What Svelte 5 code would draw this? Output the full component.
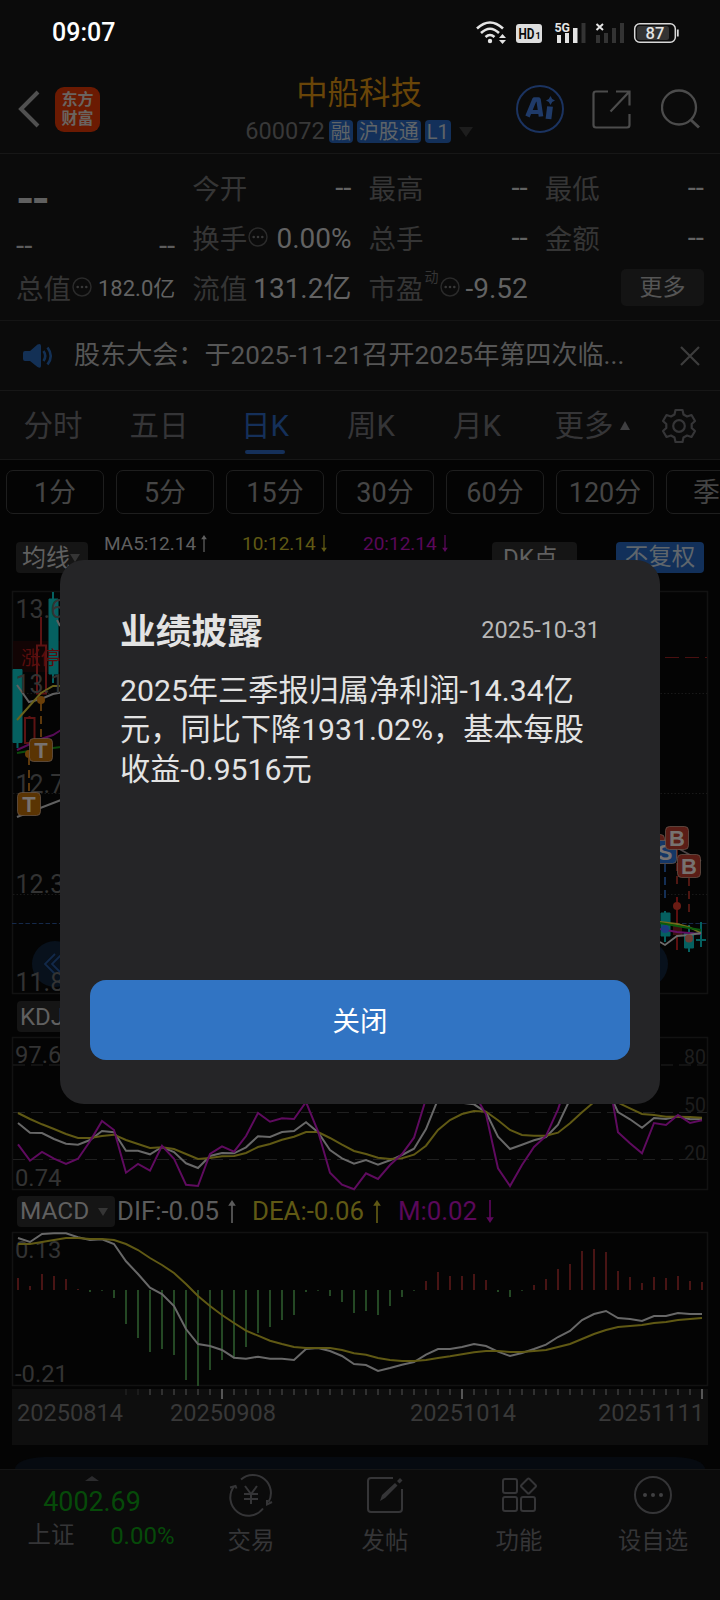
<script lang="ts">
	const stats = [
		{ label: '今开', value: '--' },
		{ label: '最高', value: '--' },
		{ label: '最低', value: '--' },
		{ label: '换手', value: '0.00%', hint: true },
		{ label: '总手', value: '--' },
		{ label: '金额', value: '--' },
		{ label: '流值', value: '131.2亿' },
		{ label: '市盈', value: '-9.52', hint: true, sup: '动' }
	];
	const tabs = ['分时', '五日', '日K', '周K', '月K'];
	const periods = ['1分', '5分', '15分', '30分', '60分', '120分', '季K'];
	const nav_items = ['交易', '发帖', '功能', '设自选'];

	const price_labels = [
		{ text: '13.6', y: 618 },
		{ text: '13.1', y: 693 },
		{ text: '12.7', y: 793 },
		{ text: '12.3', y: 893 },
		{ text: '11.8', y: 991 }
	];

	// one value per trading day, in thirds of a pixel below the top of the panel
	const kdj_k = [129, 158, 159, 177, 191, 194, 180, 153, 157, 212, 212, 223, 201, 216, 250, 264, 228, 219, 220, 202, 169, 171, 156, 153, 127, 157, 210, 235, 251, 240, 254, 241, 225, 206, 147, 58, 45, 68, 73, 97, 170, 207, 194, 181, 171, 134, 58, 20, 10, 20, 96, 118, 143, 114, 117, 109, 118, 117];
	const kdj_d = [99, 117, 133, 147, 162, 174, 174, 168, 164, 180, 192, 204, 202, 207, 222, 237, 234, 229, 228, 219, 201, 192, 179, 170, 156, 156, 174, 194, 213, 222, 233, 237, 235, 224, 197, 150, 120, 102, 93, 95, 121, 150, 165, 167, 167, 158, 130, 97, 66, 50, 68, 85, 102, 105, 110, 110, 111, 113];
	const kdj_j = [193, 242, 216, 236, 252, 236, 184, 123, 150, 278, 252, 272, 197, 236, 314, 318, 222, 199, 215, 168, 99, 125, 115, 117, 66, 154, 278, 314, 328, 280, 297, 255, 222, 173, 56, -40, -60, -20, 40, 103, 265, 318, 255, 201, 168, 88, -20, -60, -60, -50, 157, 190, 220, 129, 135, 105, 129, 121];
	const dif = [54, 66, 42, 40, 40, 52, 60, 58, 72, 124, 162, 203, 222, 258, 327, 372, 378, 390, 413, 416, 410, 416, 416, 420, 387, 384, 393, 408, 432, 435, 453, 444, 434, 426, 404, 387, 387, 381, 372, 378, 395, 408, 399, 387, 374, 351, 333, 300, 282, 273, 294, 297, 303, 288, 288, 279, 282, 282];
	const dea = [72, 72, 66, 60, 54, 54, 57, 57, 60, 72, 90, 114, 135, 159, 192, 228, 258, 285, 309, 332, 347, 362, 372, 381, 384, 384, 384, 390, 400, 404, 414, 420, 423, 423, 420, 414, 409, 403, 397, 393, 393, 396, 396, 393, 390, 381, 372, 357, 342, 330, 321, 318, 315, 309, 306, 300, 297, 294];
	const macd = [174, 198, 162, 168, 177, 207, 216, 212, 234, 312, 354, 396, 387, 405, 480, 498, 450, 420, 415, 381, 339, 321, 300, 285, 216, 212, 228, 246, 279, 273, 285, 258, 231, 212, 183, 156, 168, 168, 162, 180, 216, 231, 212, 195, 177, 147, 132, 93, 87, 96, 153, 171, 189, 171, 174, 168, 183, 186];

	const ticks = Array.from({ length: 49 }, (_, i) => i + 9);

	let active_tab = $state('日K');
	let dialog_open = $state(true);

	function dayX(index: number) {
		return 18 + index * 12;
	}

	function toPoints(values: number[], top: number) {
		return values.map((v, i) => `${dayX(i)},${(top + v / 3).toFixed(1)}`).join(' ');
	}
</script>

{#snippet hint()}
	<svg class="hint" viewBox="0 0 20 20">
		<circle cx="10" cy="10" r="9" fill="none" stroke="#2a2a2a" stroke-width="1.5" />
		<g fill="#383838"><circle cx="5.7" cy="10" r="1.3" /><circle cx="10" cy="10" r="1.3" /><circle cx="14.3" cy="10" r="1.3" /></g>
	</svg>
{/snippet}

{#snippet arrow(down: boolean)}
	<svg class="arrow" class:down viewBox="0 0 8 24">
		<path d="M4 3V24" stroke="currentColor" stroke-width="1.8" />
		<path d="M4 0L8 6H0Z" fill="currentColor" />
	</svg>
{/snippet}

{#snippet badge(x: number, y: number, letter: string, fill: string)}
	<rect x={x - 11.5} y={y - 11.5} width="23" height="23" rx="4" {fill} stroke="#6b5a50" stroke-opacity=".7" />
	<text {x} y={y + 8} class="badge-letter">{letter}</text>
{/snippet}

<div class="screen">
	<div class="status">
		<span class="clock">09:07</span>
		<svg width="206" height="30" viewBox="475 17 206 30">
			<g fill="none" stroke="#e4e4e4" stroke-width="2.6">
				<path d="M477 27.5Q490 15.5 503 27.5" />
				<path d="M481 32Q490 23.5 499 32" />
				<path d="M485.5 36Q490 32 494.5 36" />
			</g>
			<circle cx="490" cy="40" r="2.2" fill="#e4e4e4" />
			<path d="M502.5 33L506 37H499ZM502.5 43L499 39H506Z" fill="#e4e4e4" />
			<rect x="516" y="23" width="26" height="19" rx="3" fill="#dedede" />
			<text x="518.5" y="38" class="hd" textLength="16" lengthAdjust="spacingAndGlyphs">HD</text>
			<text x="535.5" y="37.5" class="hd-num">1</text>
			<text x="554.5" y="31" class="net" textLength="15.5" lengthAdjust="spacingAndGlyphs">5G</text>
			<path d="M557 34h4v8h-4zM565 32h4v10h-4zM573 27h4.5v15h-4.5z" fill="#e4e4e4" />
			<path d="M581.5 22h4v20h-4zM596 34h4v8h-4zM604 32h4v10h-4zM612 27h4v15h-4zM620 22h4v20h-4z" fill="#333" />
			<path d="M596.5 23L603 29M603 23L596.5 29" stroke="#e4e4e4" stroke-width="2" />
			<rect x="634.7" y="22.7" width="40.6" height="18.6" rx="5" fill="none" stroke="#d8d8d8" stroke-width="1.5" />
			<rect x="637" y="25" width="32" height="14" rx="2.5" fill="#333" />
			<path d="M677.8 28.5v7" stroke="#d8d8d8" stroke-width="1.8" />
			<text x="655" y="38" class="battery">87</text>
		</svg>
	</div>

	<header>
		<div class="left">
			<svg width="22" height="38" viewBox="0 0 22 38"><path d="M20 2L3 19L20 36" fill="none" stroke="#505050" stroke-width="4" /></svg>
			<div class="logo"><span>东方</span><span>财富</span></div>
		</div>
		<div class="name">
			<h1>中船科技</h1>
			<div class="code">
				<span class="num">600072</span>
				<span class="tag">融</span>
				<span class="tag">沪股通</span>
				<span class="tag">L1</span>
				<svg width="14" height="10" viewBox="0 0 14 10"><path d="M0 0H14L7 10Z" fill="#1d1d1d" /></svg>
			</div>
		</div>
		<div class="actions">
			<svg width="48" height="48" viewBox="0 0 48 48">
				<circle cx="24" cy="24" r="23" fill="none" stroke="#1b3360" stroke-width="2" />
				<path d="M11.5 31.5L18.5 14.5H22.500L25 31.5" fill="none" stroke="#1f3a68" stroke-width="4.6" stroke-linejoin="round" />
				<path d="M15 27H24" stroke="#1f3a68" stroke-width="4" />
				<path d="M34 21.5L32.5 34" stroke="#1f3a68" stroke-width="5.8" />
				<path d="M34.5 11L36.200 14L39 15.5L36.200 17L34.5 20L32.800 17L30 15.5L32.800 14Z" fill="#1f3a68" />
			</svg>
			<svg width="39" height="39" viewBox="0 0 39 39" fill="none" stroke="#4c4c4c" stroke-width="2.2">
				<path d="M16 1.5H4Q1.5 1.5 1.5 4V35Q1.5 37.5 4 37.5H35Q37.5 37.5 37.5 35V24" />
				<path d="M24 1.5H37.5V15.5M37 2L18.5 21.5" />
			</svg>
			<svg class="search" width="39" height="40" viewBox="0 0 39 40" fill="none" stroke="#4c4c4c" stroke-width="2.3">
				<circle cx="18" cy="18.5" r="17" />
				<path d="M30 31L38 38.5" stroke-width="3" />
			</svg>
		</div>
	</header>

	<section class="quote">
		<div class="last">--</div>
		{#each stats as item, index}
			{#if index === 3}
				<div class="cell change"><span>--</span><span>--</span></div>
			{:else if index === 6}
				<div class="cell"><span class="label">总值</span>{@render hint()}<span class="value small">182.0亿</span></div>
			{/if}
			<div class="cell">
				<span class="label">{item.label}</span>
				{#if item.sup}<sup>{item.sup}</sup>{/if}
				{#if item.hint}{@render hint()}{/if}
				<span class="value" class:dashes={item.value === '--'}>{item.value}</span>
			</div>
		{/each}
		<button class="more">更多</button>
	</section>

	<div class="news">
		<svg width="31" height="26" viewBox="0 0 31 26">
			<path d="M2 8H7L14.5 1.5Q18 0 18 3V23Q18 26 14.5 24L7 18H2Q0 18 0 16V10Q0 8 2 8Z" fill="#133055" />
			<path d="M20.5 8Q24 13 20.5 18M24.5 4.5Q31 13 24.5 21.5" fill="none" stroke="#133055" stroke-width="2.6" />
		</svg>
		<p>股东大会：于2025-11-21召开2025年第四次临...</p>
		<svg width="20" height="20" viewBox="0 0 20 20"><path d="M1 1L19 19M19 1L1 19" stroke="#3d3d3d" stroke-width="2.2" /></svg>
	</div>

	<nav class="tabs">
		{#each tabs as tab}
			<button class:active={tab === active_tab} onclick={() => (active_tab = tab)}>{tab}</button>
		{/each}
		<button class="wide">更多<svg width="10" height="9" viewBox="0 0 10 9"><path d="M5 0L10 9H0Z" fill="#3f3f41" /></svg></button>
		<svg class="gear" width="36" height="36" viewBox="0 0 36 36" fill="none" stroke="#353537" stroke-width="2.2" stroke-linejoin="round">
			<path d="M14.5 2H21.5L22.5 6.5L26 8.5L30.5 7L34 13L30.7 16V20L34 23L30.5 29L26 27.5L22.5 29.5L21.5 34H14.5L13.5 29.5L10 27.5L5.5 29L2 23L5.3 20V16L2 13L5.5 7L10 8.5L13.5 6.5Z" />
			<circle cx="18" cy="18" r="5.8" />
		</svg>
	</nav>

	<div class="periods">
		{#each periods as period}
			<button>{period}</button>
		{/each}
	</div>

	<div class="ma">
		<span class="pill ma-pill">均线<i class="caret"></i></span>
		<div class="ma-values">
			<span class="white">MA5:12.14 {@render arrow(false)}</span>
			<span class="yellow">10:12.14 {@render arrow(true)}</span>
			<span class="magenta">20:12.14 {@render arrow(true)}</span>
		</div>
		<span class="pill dk">DK点</span>
		<span class="pill blue">不复权</span>
	</div>

	<svg class="chart" width="720" height="412" viewBox="0 588 720 412">
		<rect x="12.5" y="591.5" width="695" height="402" class="frame" />
		<g stroke="#191919" stroke-dasharray="1.5 2">
			<path d="M13 693.5H707M13 793.5H707M13 894.5H707" />
		</g>
		<rect x="13" y="641" width="50" height="31" fill="#120404" />
		<path d="M665 657.5H707" stroke="#4a1010" stroke-dasharray="14 6" />
		<path d="M12 923.5H707" stroke="#15294a" stroke-dasharray="4.5 2.2" stroke-width="1.2" />
		<circle cx="55" cy="964" r="23" fill="#08111c" />
		<circle cx="645" cy="964" r="23" fill="#08111c" />
		<path d="M55 954L45 964L55 974M62 954L52 964L62 974" fill="none" stroke="#12294a" stroke-width="1.8" />
		<path d="M17.5 669V748M53 592V683" class="teal" stroke-width="2" />
		<path d="M13 669.5h9v73h-9zM49 599h9v75h-9z" class="teal" />
		<g fill="none" stroke="#5c1313" stroke-width="2">
			<path d="M41 617V645M29.5 716V718" />
			<rect x="25" y="718" width="9.5" height="25" />
			<rect x="37" y="645.5" width="9" height="48" />
		</g>
		<text x="21" y="664.5" class="limit">涨停</text>
		<g fill="none" stroke-width="2">
			<path d="M17 685L29 702L41 699L53 694L61 692.5M17 817L61 800M57 620L60 626" stroke="#606060" />
			<path d="M17 720L41 693L53 686H61" stroke="#6a621c" />
			<path d="M17 750L41 739L53 735L61 730" stroke="#560b56" />
			<path d="M17 753L29 751L61 747" stroke="#0c4a0c" />
		</g>
		{#each price_labels as label}
			<text x="15.5" y={label.y} class="axis big">{label.text}</text>
		{/each}
		<path d="M41 703V738M29 757V792" stroke="#5e390c" stroke-width="2" stroke-dasharray="8 5" />
		<circle cx="41" cy="700" r="4" fill="#6b3f08" />
		<circle cx="29" cy="754" r="4" fill="#6b3f08" />
		{@render badge(41, 750, 'T', '#5a3403')}
		{@render badge(29, 804, 'T', '#5a3403')}

		<path d="M665 864V902" stroke="#142f55" stroke-width="2" stroke-dasharray="8 5" />
		<path d="M677 850V889M689 878V917" stroke="#4f1712" stroke-width="2" stroke-dasharray="8 5" />
		<path d="M665 911V942M689 925V952M701 922V947M696 940H706" class="teal" stroke-width="2" />
		<path d="M661 913h9v23h-9zM684.5 933h9v15h-9z" class="teal" />
		<path d="M677 897V950" stroke="#5c0f0f" stroke-width="2" />
		<path d="M673 924h9v11h-9z" fill="#3c1010" />
		<g fill="none" stroke-width="1.8">
			<path d="M660 922L677 924L689 927L701 933" stroke="#756c1c" />
			<path d="M660 923L689 928L701 930" stroke="#0c5a0c" />
			<path d="M660 929L677 932L701 934" stroke="#621062" />
			<path d="M660 942L665 945L677 936L689 935L701 933" stroke="#6c6c6c" />
			<path d="M665 841L701 861" stroke="#4e4446" />
		</g>
		<circle cx="665" cy="929" r="4" fill="#1b3c80" />
		<circle cx="677" cy="906" r="4" fill="#6b1c14" />
		<circle cx="689" cy="938.5" r="4" fill="#6e3c34" />
		{@render badge(653, 846, 'B', '#5a1d16')}
		{@render badge(665, 852, 'S', '#153766')}
		{@render badge(677, 838, 'B', '#5a1d16')}
		{@render badge(689, 866, 'B', '#5a1d16')}
	</svg>

	<div class="indicator first"><span class="pill">KDJ</span></div>

	<svg class="chart" width="720" height="160" viewBox="0 1034 720 160">
		<rect x="12.5" y="1037.5" width="695" height="152" class="frame" />
		<path d="M13 1065H707M13 1112.5H707M13 1159.5H707" stroke="#202020" stroke-dasharray="12 6" />
		<text x="15" y="1063" class="axis">97.6</text>
		<text x="15" y="1186" class="axis">0.74</text>
		<text x="706" y="1064" class="level">80</text>
		<text x="706" y="1112" class="level">50</text>
		<text x="706" y="1159.5" class="level">20</text>
		<polyline points={toPoints(kdj_k, 1080)} stroke="#686868" />
		<polyline points={toPoints(kdj_d, 1080)} stroke="#605914" />
		<polyline points={toPoints(kdj_j, 1080)} stroke="#5f0b5f" />
	</svg>

	<div class="indicator">
		<span class="pill macd">MACD<i class="caret"></i></span>
		<span class="dif">DIF:-0.05 {@render arrow(false)}</span>
		<span class="yellow dea">DEA:-0.06 {@render arrow(false)}</span>
		<span class="magenta">M:0.02 {@render arrow(true)}</span>
	</div>

	<svg class="chart" width="720" height="216" viewBox="0 1230 720 216">
		<rect x="12.5" y="1232.5" width="695" height="153" class="frame" />
		<text x="15" y="1258" class="axis">0.13</text>
		<text x="15" y="1382" class="axis">-0.21</text>
		{#each macd as value, i}
			<path d="M{dayX(i)} 1290V{(1220 + value / 3).toFixed(1)}" stroke={value < 210 ? '#481414' : '#244824'} stroke-width="2" />
		{/each}
		<polyline points={toPoints(dif, 1220)} stroke="#686868" />
		<polyline points={toPoints(dea, 1220)} stroke="#605914" />
		<rect x="12" y="1389" width="696" height="56" fill="#0e0e0e" />
		{#each ticks as i}
			{@const major = i % 20 === 17}
			<path d="M{dayX(i)} 1389v{major ? 10 : 6}" stroke={major ? '#565656' : i < 11 ? '#1b1b1b' : '#303030'} stroke-width="2" />
		{/each}
		<g class="dates">
			<text x="17" y="1421">20250814</text>
			<text x="170" y="1421">20250908</text>
			<text x="410" y="1421">20251014</text>
			<text x="598" y="1421">20251111</text>
		</g>
	</svg>

	<div class="strip"></div>

	<footer>
		<div class="index">
			<svg width="14" height="5" viewBox="0 0 14 5"><path d="M7 0L14 5H0Z" fill="#2b2b2d" /></svg>
			<span class="point">4002.69</span>
			<div class="row"><span>上证</span><span class="rate">0.00%</span></div>
		</div>
		{#each nav_items as item, i}
			<div class="item">
				<svg width="44" height="40" viewBox="0 0 44 40" fill="none" stroke="#353537" stroke-width="2">
					{#if i === 0}
						<path d="M12 4.5A18 18 0 0 1 39.500 27M34 33.500A18 18 0 0 1 5 11.500" />
						<path d="M1 12.5L6.5 11L7.5 13.5M43 27L38 29.5L38 25" />
						<path d="M16 11L22 19L28 11M22 19V29M15 19H29M15 24H29" />
					{:else if i === 1}
						<path d="M30 3H8Q5 3 5 6V34Q5 37 8 37H36Q39 37 39 34V14" />
						<path d="M17 26L19 20L32 8L34.5 10.5L22 23ZM34 6L37 3L39.5 5.5L36.5 8.5Z" fill="#353537" stroke="none" />
					{:else if i === 2}
						<rect x="6" y="4" width="14" height="14" rx="2" />
						<rect x="6" y="22" width="14" height="14" rx="2" />
						<rect x="24" y="22" width="14" height="14" rx="2" />
						<path d="M30.5 4Q31.5 3 32.5 4L38.5 10Q39.5 11 38.5 12L32.5 18Q31.5 19 30.5 18L24.5 12Q23.5 11 24.5 10Z" />
					{:else}
						<circle cx="22" cy="20" r="18" />
						<g fill="#404042" stroke="none"><circle cx="14" cy="20" r="2" /><circle cx="22" cy="20" r="2" /><circle cx="30" cy="20" r="2" /></g>
					{/if}
				</svg>
				<span>{item}</span>
			</div>
		{/each}
	</footer>

	{#if dialog_open}
		<div class="dialog" role="dialog" aria-label="业绩披露">
			<div class="dialog-head">
				<h2>业绩披露</h2>
				<time>2025-10-31</time>
			</div>
			<p>2025年三季报归属净利润-14.34亿元，同比下降1931.02%，基本每股收益-0.9516元</p>
			<button onclick={() => (dialog_open = false)}>关闭</button>
		</div>
	{/if}
</div>

<style>
	:global(body) {
		background: #0b0b0b;
	}

	.screen {
		position: relative;
		width: 720px;
		height: 1600px;
		overflow: hidden;
		display: flex;
		flex-direction: column;
		background: #040404;
		color: #5c5c5c;
		font-family: Roboto, 'Noto Sans CJK SC', sans-serif;
		line-height: 1;
	}

	.screen * {
		box-sizing: border-box;
	}

	.screen > * {
		flex-shrink: 0;
	}

	svg {
		display: block;
		flex-shrink: 0;
	}

	button {
		padding: 0;
		border: 0;
		background: none;
		color: inherit;
		font: inherit;
	}

	h1,
	h2,
	p {
		margin: 0;
		font-weight: 400;
	}

	.status {
		height: 65px;
		padding: 0 39px 0 52px;
		display: flex;
		align-items: center;
		justify-content: space-between;
		background: #0b0b0b;
	}

	.clock {
		color: #fff;
		font-size: 25px;
		font-weight: 500;
	}

	.hd {
		font: 700 15px Roboto, sans-serif;
		fill: #0b0b0b;
	}

	.hd-num {
		font: 700 9px Roboto, sans-serif;
		fill: #0b0b0b;
	}

	.net {
		font: 700 13.5px Roboto, sans-serif;
		fill: #e4e4e4;
	}

	.battery {
		font: 500 16.5px Roboto, sans-serif;
		fill: #e4e4e4;
		text-anchor: middle;
	}

	header {
		height: 89px;
		padding: 0 20px 0 18px;
		display: grid;
		grid-template-columns: 1fr auto 1fr;
		align-items: center;
		background: #0b0b0b;
		border-bottom: 1px solid #171717;
	}

	.left {
		display: flex;
		align-items: center;
		gap: 15px;
	}

	.logo {
		width: 45px;
		height: 45px;
		border-radius: 9px;
		display: flex;
		flex-direction: column;
		align-items: center;
		justify-content: center;
		gap: 3px;
		background: #6b1a02;
		color: #6a6460;
		font-size: 16px;
		font-weight: 700;
	}

	.name {
		padding-top: 3px;
		display: flex;
		flex-direction: column;
		align-items: center;
		gap: 11px;
	}

	h1 {
		color: #694508;
		font-size: 31.4px;
	}

	.code {
		display: flex;
		align-items: center;
		gap: 4px;
		height: 23px;
	}

	.num {
		color: #383838;
		font-size: 23.6px;
	}

	.tag {
		height: 23px;
		padding: 1px 2px 0;
		border-radius: 4px;
		background: #13305a;
		color: #5f6468;
		font-size: 20px;
		line-height: 23px;
	}

	.code svg {
		margin-left: 4px;
	}

	.actions {
		display: flex;
		align-items: center;
		justify-content: flex-end;
		gap: 28px;
	}

	.search {
		margin-left: 2px;
	}

	.quote {
		height: 167px;
		padding: 10px 16px 7px;
		display: grid;
		grid-template-columns: repeat(4, 1fr);
		grid-template-rows: repeat(3, 50px);
		column-gap: 17px;
		background: #0b0b0b;
		border-bottom: 1px solid #151515;
	}

	.last {
		height: 50px;
		color: #606060;
		font-size: 47px;
		font-weight: 700;
		letter-spacing: -3px;
		line-height: 70px;
	}

	.cell {
		display: flex;
		align-items: center;
	}

	.change {
		justify-content: space-between;
		padding-top: 15px;
		font-size: 29.5px;
	}

	.label {
		padding-top: 1px;
		color: #353535;
		font-size: 27.5px;
	}

	.value {
		margin-left: auto;
		color: #626262;
		font-size: 28px;
	}

	.dashes {
		font-size: 29.5px;
	}

	.small {
		font-size: 22px;
	}

	.hint {
		width: 20px;
		height: 20px;
		margin: 0 0 5px 1px;
	}

	sup {
		margin: 0 0 25px 1px;
		color: #353535;
		font-size: 14px;
		line-height: 1;
	}

	.more {
		width: 83px;
		height: 37px;
		margin: 5px 0 0 auto;
		border-radius: 5px;
		background: #141414;
		color: #555;
		font-size: 23px;
	}

	.news {
		height: 70px;
		padding: 0 20px 0 23px;
		display: flex;
		align-items: center;
		background: #0b0b0b;
		border-bottom: 1px solid #171717;
	}

	.news p {
		flex: 1;
		margin-left: 20px;
		color: #565656;
		font-size: 26.1px;
	}

	.tabs {
		height: 69px;
		display: flex;
		align-items: center;
		background: #0b0b0b;
		border-bottom: 1px solid #171717;
		color: #353537;
		font-size: 29.5px;
	}

	.tabs button {
		width: 106px;
		height: 68px;
		padding-top: 4px;
		display: flex;
		flex-direction: column;
		align-items: center;
		justify-content: center;
	}

	.tabs .active {
		color: #15305a;
	}

	.tabs .active::after {
		content: '';
		width: 40px;
		height: 4px;
		margin-top: 8px;
		margin-bottom: -12px;
		border-radius: 2px;
		background: #15305a;
	}

	.tabs .wide {
		width: 124px;
		flex-direction: row;
		align-items: center;
		gap: 6px;
	}

	.tabs .wide svg {
		margin-bottom: 4px;
	}

	.gear {
		margin: 1px 0 0 7px;
	}

	.periods {
		height: 64px;
		padding: 10px 6px;
		display: flex;
		gap: 12px;
	}

	.periods button {
		flex: 0 0 98px;
		height: 44px;
		padding-top: 3px;
		border: 1px solid #1e1e1e;
		border-radius: 7px;
		color: #454545;
		font-size: 27px;
	}

	.ma {
		height: 64px;
		padding: 0 16px;
		display: flex;
		align-items: flex-start;
	}

	.pill {
		height: 31px;
		padding: 0 5px;
		border-radius: 4px;
		display: inline-flex;
		align-items: center;
		background: #151515;
		color: #606060;
		font-size: 24px;
	}

	.ma .pill {
		margin-top: 18px;
	}

	.ma .ma-pill {
		width: 72px;
		padding-left: 6px;
	}

	.caret {
		border: 5px solid transparent;
		border-top: 8px solid #353535;
		border-bottom: 0;
	}

	.ma-values {
		flex: 1;
		margin: 7px 0 0 16px;
		display: flex;
		font-size: 19px;
	}

	.ma-values span {
		display: flex;
		align-items: center;
		gap: 5px;
		height: 24px;
	}

	.ma-values .white {
		width: 138px;
		color: #606060;
	}

	.ma-values .yellow {
		width: 121px;
	}

	.ma .dk {
		width: 85px;
		padding-left: 11px;
		margin-right: 39px;
	}

	.ma .blue {
		width: 88px;
		justify-content: center;
		background: #12305a;
		color: #5f666c;
		font-size: 23.5px;
	}

	.yellow {
		color: #605914;
	}

	.magenta {
		color: #5a085a;
	}

	.arrow {
		width: 6px;
		height: 17px;
	}

	.arrow.down {
		transform: rotate(180deg);
	}

	.frame {
		fill: none;
		stroke: #121212;
		stroke-width: 1.6;
	}

	.chart polyline {
		fill: none;
		stroke-width: 2;
	}

	.teal {
		fill: #056060;
		stroke: #056060;
	}

	.axis {
		fill: #333;
		font-size: 23.8px;
	}

	.big {
		font-size: 25px;
	}

	.limit {
		fill: #5a0d0d;
		font-size: 19.5px;
	}

	.level {
		fill: #1e1e1e;
		font-size: 19.5px;
		text-anchor: end;
	}

	.badge-letter {
		fill: #777270;
		font: 700 22px 'Liberation Sans', sans-serif;
		text-anchor: middle;
	}

	.dates {
		fill: #383838;
		font-size: 23.6px;
	}

	.indicator {
		height: 36px;
		padding: 2px 0 0 17px;
		display: flex;
		align-items: flex-start;
		font-size: 25.8px;
	}

	.indicator.first {
		height: 34px;
		padding-top: 1px;
	}

	.indicator .pill {
		padding: 0 3px;
	}

	.indicator .macd {
		width: 98px;
		font-size: 24.4px;
	}

	.indicator .caret {
		margin-left: 9px;
	}

	.indicator > span:not(.pill) {
		display: flex;
		align-items: center;
		gap: 9px;
		height: 31px;
	}

	.indicator .arrow {
		width: 8px;
		height: 23px;
	}

	.indicator .dif {
		width: 135px;
		margin-left: 2px;
	}

	.indicator .dea {
		width: 146px;
	}

	.strip {
		height: 12px;
		margin: 11px 15px 0;
		border-radius: 30px 30px 0 0 / 12px 12px 0 0;
		background: #060a10;
	}

	footer {
		flex: 1;
		display: flex;
		background: #0b0b0b;
		border-top: 1px solid #151515;
		color: #353537;
		font-size: 23.4px;
	}

	.index {
		width: 184px;
		padding-top: 6px;
		display: flex;
		flex-direction: column;
		align-items: center;
	}

	.point {
		margin-top: 8px;
		color: #064a09;
		font-size: 26.8px;
	}

	.row {
		width: 147px;
		margin: 8px 0 0 18px;
		display: flex;
		align-items: center;
		justify-content: space-between;
	}

	.rate {
		color: #064a09;
		font-size: 24px;
	}

	.item {
		width: 134px;
		padding-top: 5px;
		display: flex;
		flex-direction: column;
		align-items: center;
		gap: 15px;
	}

	.item svg {
		overflow: visible;
	}

	.dialog {
		position: absolute;
		left: 60px;
		top: 560px;
		width: 600px;
		height: 544px;
		padding: 50px 60px 44px;
		display: flex;
		flex-direction: column;
		border-radius: 24px;
		background: #252527;
		color: #e3e3e3;
	}

	.dialog-head {
		height: 42px;
		display: flex;
		align-items: center;
		justify-content: space-between;
	}

	h2 {
		padding-top: 4px;
		font-size: 35.7px;
		font-weight: 700;
	}

	time {
		color: #b8b8b8;
		font-size: 23.5px;
	}

	.dialog p {
		margin-top: 19px;
		font-size: 30.2px;
		line-height: 39.3px;
	}

	.dialog button {
		height: 80px;
		margin: auto -30px 0;
		padding-top: 3px;
		border-radius: 16px;
		background: #3174c3;
		color: #fff;
		font-size: 27.5px;
	}
</style>
